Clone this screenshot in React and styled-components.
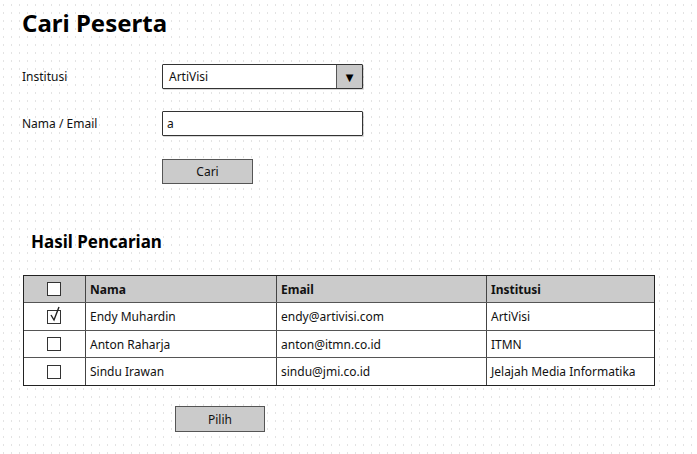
import styled, { createGlobalStyle } from 'styled-components';

const GlobalStyle = createGlobalStyle`
  html, body {
    margin: 0;
    padding: 0;
  }
  body {
    width: 697px;
    height: 454px;
    overflow: hidden;
    font-family: "Noto Sans", "DejaVu Sans", sans-serif;
    color: #111;
    background-color: #e3e3e3;
    background-image:
      linear-gradient(90deg, #fff 7px, transparent 7px),
      linear-gradient(#fff 6px, transparent 6px);
    background-size: 8px 8px;
    background-position: -4px -2px;
  }
`;

const Page = styled.div`
  padding: 8px 0 0 22px;
`;

const Title = styled.h1`
  margin: 0;
  font-size: 24px;
  line-height: 30px;
  font-weight: 700;
  color: #000;
`;

const Form = styled.div`
  margin-top: 26px;
  display: grid;
  grid-template-columns: 140px 201px;
  grid-auto-rows: 25px;
  row-gap: 22px;
  align-items: center;
`;

const Label = styled.div`
  font-size: 12px;
`;

const Field = styled.div`
  height: 25px;
  box-sizing: border-box;
  border: 1.5px solid #333;
  border-radius: 1px;
  background: #fff;
  display: flex;
  align-items: center;
  font-size: 12px;
  box-shadow: 1px 1px 0 rgba(0, 0, 0, 0.15);
`;

const FieldText = styled.span`
  flex: 1;
  padding-left: ${(p) => p.$pad || 4}px;
`;

const Arrow = styled.div`
  width: 25px;
  align-self: stretch;
  background: #c9c9c9;
  border-left: 1.5px solid #555;
  display: flex;
  align-items: center;
  justify-content: center;
  font-size: 10px;
  color: #000;
`;

const Button = styled.div`
  width: ${(p) => p.$w || 91}px;
  height: ${(p) => p.$h || 25}px;
  box-sizing: border-box;
  border: 1.5px solid #555;
  background: #cbcbcb;
  display: flex;
  align-items: center;
  justify-content: center;
  font-size: 12px;
  color: #111;
  margin-top: ${(p) => p.$top || 0}px;
  margin-left: ${(p) => p.$left || 0}px;
  align-self: start;
`;

const Heading = styled.h2`
  margin: 47px 0 0 9px;
  font-size: 17px;
  line-height: 24px;
  font-weight: 700;
  color: #000;
`;

const Table = styled.div`
  margin: 21px 0 0 1px;
  width: 632px;
  box-sizing: border-box;
  border: 1.5px solid #222;
  background: #fff;
`;

const Row = styled.div`
  display: grid;
  grid-template-columns: 61px 191px 210px 1fr;
  height: ${(p) => p.$h || 27}px;
  background: ${(p) => (p.$head ? '#cbcbcb' : '#fff')};
  border-top: ${(p) => (p.$first ? 'none' : '1.5px solid #555')};
  font-size: 12px;
  font-weight: ${(p) => (p.$head ? 700 : 400)};
`;

const Cell = styled.div`
  display: flex;
  align-items: center;
  padding-left: 4px;
  border-left: ${(p) => (p.$first ? 'none' : '1.5px solid #444')};
  justify-content: ${(p) => (p.$center ? 'center' : 'flex-start')};
  white-space: nowrap;
  overflow: hidden;
`;

const Box = styled.div`
  position: relative;
  width: 14px;
  height: 14px;
  box-sizing: border-box;
  border: 1.5px solid #333;
  background: #fff;
  margin-left: -5px;

  svg {
    position: absolute;
    left: 1px;
    top: -5px;
  }
`;

function Checkbox({ checked }) {
  return (
    <Box>
      {checked && (
        <svg width="13" height="16" viewBox="0 0 13 16">
          <path d="M2 9 L5 14 L10 1" fill="none" stroke="#222" strokeWidth="1.4" />
        </svg>
      )}
    </Box>
  );
}

const rows = [
  { checked: true, nama: 'Endy Muhardin', email: 'endy@artivisi.com', inst: 'ArtiVisi', h: 27 },
  { checked: false, nama: 'Anton Raharja', email: 'anton@itmn.co.id', inst: 'ITMN', h: 26 },
  { checked: false, nama: 'Sindu Irawan', email: 'sindu@jmi.co.id', inst: 'Jelajah Media Informatika', h: 27 },
];

export default function App() {
  return (
    <Page>
      <GlobalStyle />
      <Title>Cari Peserta</Title>
      <Form>
        <Label>Institusi</Label>
        <Field>
          <FieldText $pad={6}>ArtiVisi</FieldText>
          <Arrow>▼</Arrow>
        </Field>
        <Label>Nama / Email</Label>
        <Field>
          <FieldText>a</FieldText>
        </Field>
        <div />
        <Button $top={1}>Cari</Button>
      </Form>
      <Heading>Hasil Pencarian</Heading>
      <Table>
        <Row $head $first $h={26}>
          <Cell $first $center>
            <Checkbox />
          </Cell>
          <Cell>Nama</Cell>
          <Cell>Email</Cell>
          <Cell>Institusi</Cell>
        </Row>
        {rows.map((r) => (
          <Row key={r.nama} $h={r.h}>
            <Cell $first $center>
              <Checkbox checked={r.checked} />
            </Cell>
            <Cell>{r.nama}</Cell>
            <Cell>{r.email}</Cell>
            <Cell>{r.inst}</Cell>
          </Row>
        ))}
      </Table>
      <Button $left={153} $w={90} $h={26} $top={20}>
        Pilih
      </Button>
    </Page>
  );
}
